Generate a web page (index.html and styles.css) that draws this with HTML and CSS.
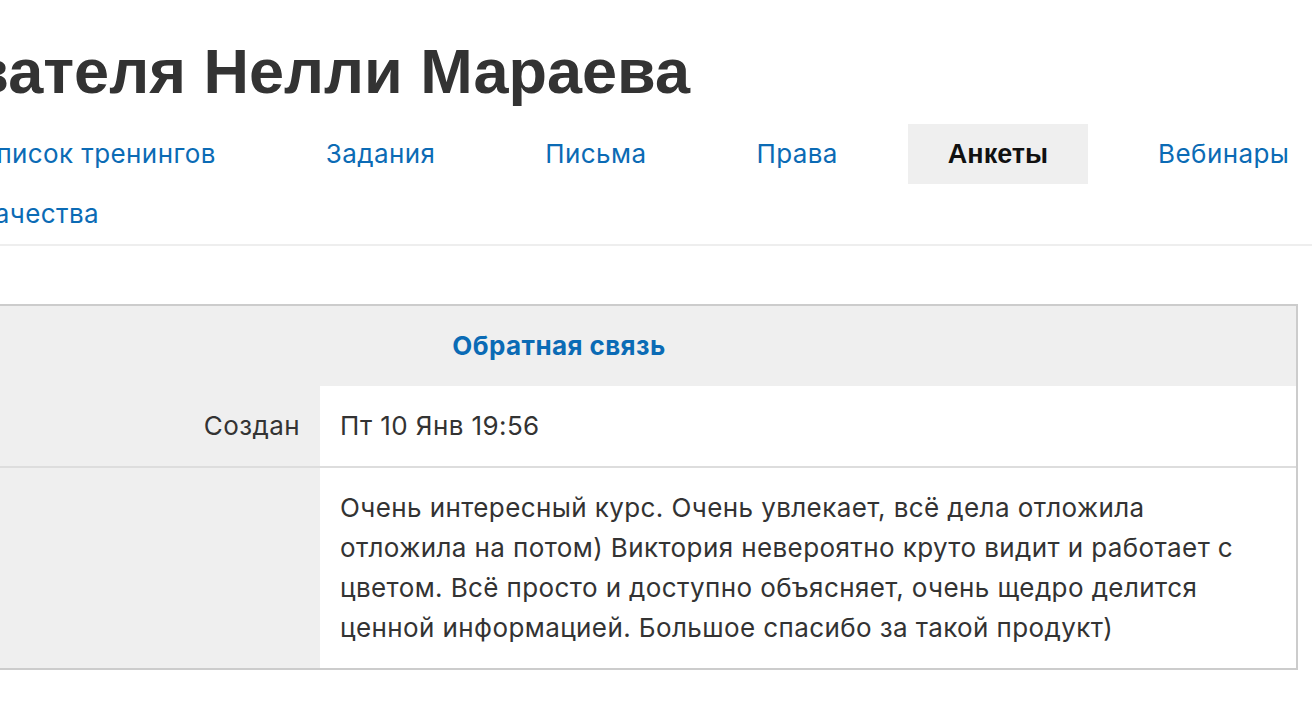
FILE: index.html
```html
<!DOCTYPE html>
<html lang="ru">
<head>
<meta charset="utf-8">
<title>Анкеты пользователя Нелли Мараева</title>
<link rel="stylesheet" href="styles.css">
</head>
<body>
<div class="viewport">
  <div class="title-wrap">
    <h1 class="title">Анкеты пользователя Нелли Мараева</h1>
  </div>
  <nav class="tabs">
    <a class="tab" href="#">Список тренингов</a>
    <a class="tab" href="#">Задания</a>
    <a class="tab" href="#">Письма</a>
    <a class="tab" href="#">Права</a>
    <a class="tab tab-active" href="#">Анкеты</a>
    <a class="tab" href="#">Вебинары</a>
    <a class="tab" href="#">Качества</a>
  </nav>
  <table class="survey">
    <tr>
      <th class="survey-head" colspan="2"><a href="#">Обратная связь</a></th>
    </tr>
    <tr>
      <td class="label">Создан</td>
      <td class="value">Пт 10 Янв 19:56</td>
    </tr>
    <tr class="row-sep">
      <td class="label"></td>
      <td class="value"><div class="answer">Очень интересный курс. Очень увлекает, всё дела отложила отложила на потом) Виктория невероятно круто видит и работает с цветом. Всё просто и доступно объясняет, очень щедро делится ценной информацией. Большое спасибо за такой продукт)</div></td>
    </tr>
  </table>
</div>
</body>
</html>
```
FILE: styles.css
```css
html, body {
  margin: 0;
  padding: 0;
  background: #fff;
}
body {
  font-family: Inter, "Noto Sans", sans-serif;
  color: #333;
}
.viewport {
  width: 1312px;
  height: 708px;
  overflow: hidden;
}
.title-wrap {
  display: flex;
  justify-content: flex-end;
  width: 690px;
}
.title {
  flex: none;
  margin: 0;
  padding-top: 33px;
  font-family: "Liberation Sans", Arial, sans-serif;
  font-size: 63px;
  line-height: 77px;
  font-weight: 700;
  color: #333;
  white-space: nowrap;
}
.tabs {
  margin: 14px 0 0 -63px;
  width: 1440px;
  display: flex;
  flex-wrap: wrap;
  column-gap: 30px;
  border-bottom: 2px solid #eee;
}
.tab {
  display: block;
  padding: 0 40px;
  height: 60px;
  line-height: 60px;
  font-size: 26px;
  letter-spacing: 0.4px;
  color: #0b6bb5;
  text-decoration: none;
  white-space: nowrap;
}
.tab-active {
  background: #efefef;
  color: #111;
  font-family: "Liberation Sans", Arial, sans-serif;
  font-weight: 700;
  font-size: 27px;
  letter-spacing: 0;
}
.survey {
  margin: 58px 0 0 -180px;
  width: 1478px;
  border: 2px solid #ccc;
  border-spacing: 0;
  font-size: 26px;
  letter-spacing: 0.4px;
  line-height: 40px;
}
.survey td, .survey th {
  padding: 20px;
  vertical-align: top;
}
.survey-head {
  background: #efefef;
  text-align: center;
  font-weight: 700;
}
.survey-head a {
  color: #0b6bb5;
  text-decoration: none;
}
.label {
  width: 458px;
  background: #efefef;
  text-align: right;
  color: #333;
}
.value {
  color: #333;
}
.row-sep td {
  border-top: 2px solid #ddd;
}
.answer {
  max-width: 912px;
}
```
